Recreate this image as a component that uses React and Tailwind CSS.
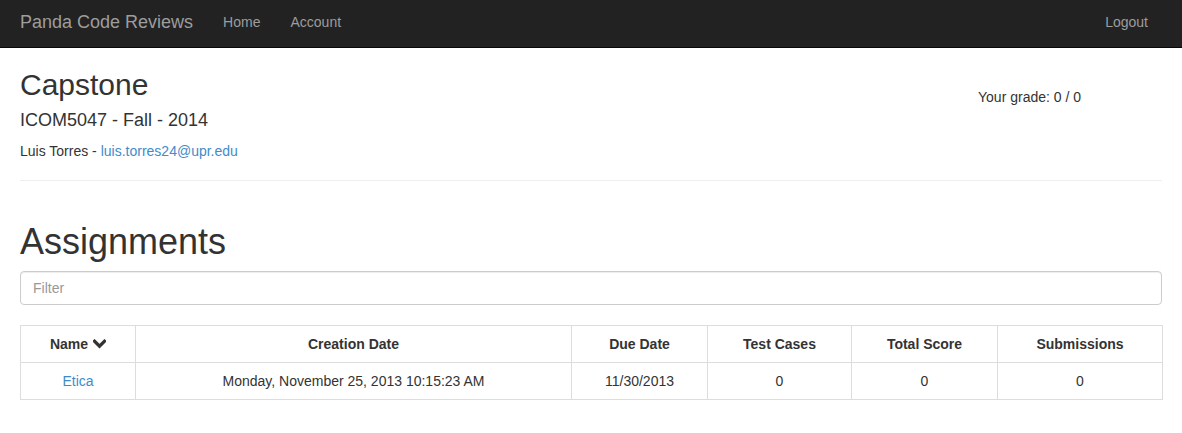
import React from "react";

function Chevron() {
  return (
    <svg width="13" height="10" viewBox="0 0 13 10" className="inline-block ml-[5px] align-[0px]">
      <path d="M1.5 2.2 L6.5 7.2 L11.5 2.2" fill="none" stroke="#333" strokeWidth="3.2" strokeLinecap="square" />
    </svg>
  );
}

export default function App() {
  const font = { fontFamily: '"Liberation Sans", Arial, Helvetica, sans-serif' };
  const cols = [
    { label: "Name", w: "w-[115px]", chevron: true },
    { label: "Creation Date", w: "w-[436px]" },
    { label: "Due Date", w: "w-[136px]" },
    { label: "Test Cases", w: "w-[144px]" },
    { label: "Total Score", w: "w-[146px]" },
    { label: "Submissions", w: "w-[165px]" },
  ];
  return (
    <div style={font} className="min-h-[433px] bg-white text-[#333] text-[14px] leading-[20px]">
      <nav className="h-[48px] bg-[#222] border-b border-[#080808] flex items-center px-[5px] pb-[4px]">
        <span className="px-[15px] text-[18px] text-[#9d9d9d] leading-[20px]">Panda Code Reviews</span>
        <span className="px-[15px] text-[#9d9d9d]">Home</span>
        <span className="px-[15px] text-[#9d9d9d]">Account</span>
        <span className="ml-auto px-[15px] mr-[14px] text-[#9d9d9d]">Logout</span>
      </nav>
      <div className="px-[20px]">
        <div className="flex justify-between">
          <div>
            <h2 className="mt-[20px] mb-[10px] text-[30px] leading-[1.1] font-normal">Capstone</h2>
            <h4 className="mt-[10px] mb-[10px] text-[18px] leading-[1.1] font-normal">ICOM5047 - Fall - 2014</h4>
            <p className="m-0">
              Luis Torres - <span className="text-[#428bca]">luis.torres24@upr.edu</span>
            </p>
          </div>
          <div className="w-[184px] mt-[39px]">Your grade: 0 / 0</div>
        </div>
        <hr className="mt-[19px] mb-[20px] border-0 border-t border-[#eee]" />
        <h1 className="mt-[41px] mb-[10px] text-[36px] leading-[1.1] font-normal">Assignments</h1>
        <div className="h-[34px] border border-[#ccc] rounded-[4px] px-[12px] flex items-center text-[#999] shadow-[inset_0_1px_1px_rgba(0,0,0,0.075)]">
          Filter
        </div>
        <table className="mt-[20px] w-full border-collapse border border-[#ddd] table-fixed">
          <thead>
            <tr>
              {cols.map((c) => (
                <th key={c.label} className={`${c.w} border border-[#ddd] p-[8px] font-bold text-center`}>
                  {c.label}
                  {c.chevron && <Chevron />}
                </th>
              ))}
            </tr>
          </thead>
          <tbody>
            <tr>
              <td className="border border-[#ddd] p-[8px] text-center text-[#428bca]">Etica</td>
              <td className="border border-[#ddd] p-[8px] text-center">Monday, November 25, 2013 10:15:23 AM</td>
              <td className="border border-[#ddd] p-[8px] text-center">11/30/2013</td>
              <td className="border border-[#ddd] p-[8px] text-center">0</td>
              <td className="border border-[#ddd] p-[8px] text-center">0</td>
              <td className="border border-[#ddd] p-[8px] text-center">0</td>
            </tr>
          </tbody>
        </table>
      </div>
    </div>
  );
}
